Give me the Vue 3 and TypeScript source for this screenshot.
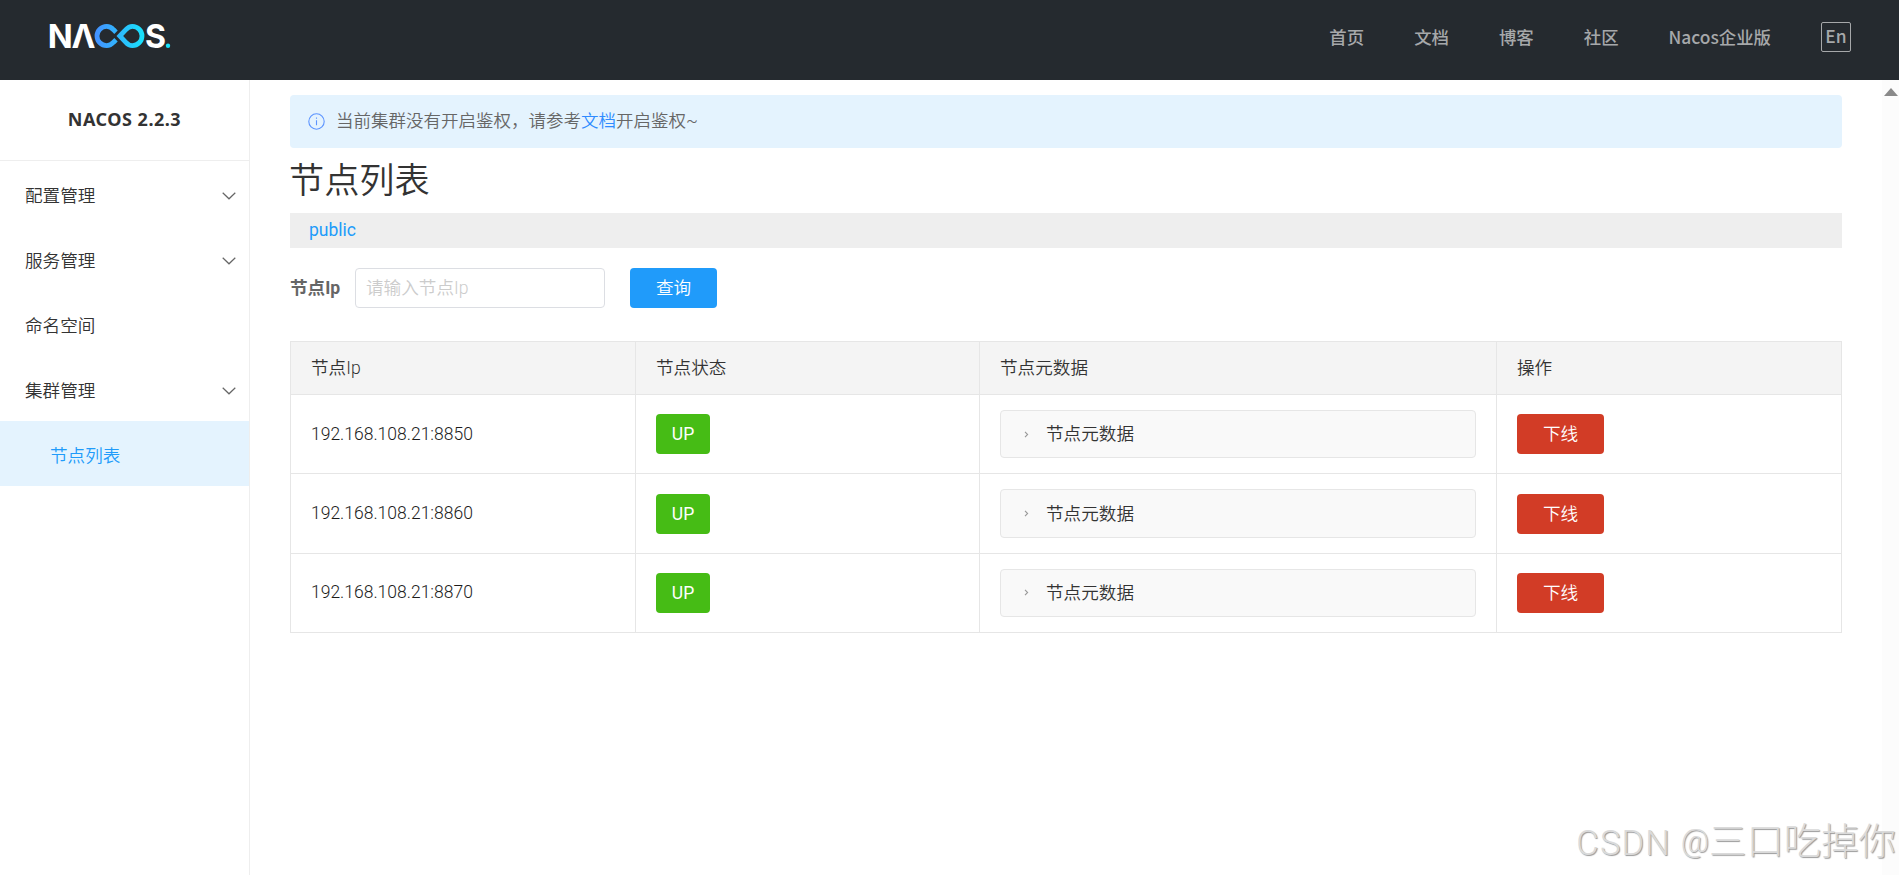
<script setup lang="ts">
interface MenuItem {
  label: string
  expandable: boolean
}

interface ClusterNode {
  ip: string
  state: string
}

const navLinks: string[] = ['首页', '文档', '博客', '社区', 'Nacos企业版']

const menu: MenuItem[] = [
  { label: '配置管理', expandable: true },
  { label: '服务管理', expandable: true },
  { label: '命名空间', expandable: false },
  { label: '集群管理', expandable: true },
]

const columns: string[] = ['节点Ip', '节点状态', '节点元数据', '操作']

const nodes: ClusterNode[] = [
  { ip: '192.168.108.21:8850', state: 'UP' },
  { ip: '192.168.108.21:8860', state: 'UP' },
  { ip: '192.168.108.21:8870', state: 'UP' },
]
</script>

<template>
  <div class="page">
    <header class="topbar">
      <svg class="logo" width="122" height="26" viewBox="0 0 122 26">
        <defs>
          <linearGradient id="loop" gradientUnits="userSpaceOnUse" x1="45" y1="0" x2="95" y2="0">
            <stop offset="0" stop-color="#4590ff" />
            <stop offset="1" stop-color="#16e3fb" />
          </linearGradient>
        </defs>
        <text class="logo-text" x="-2.3" y="25" textLength="25" lengthAdjust="spacingAndGlyphs">N</text>
        <text class="logo-text" x="21.5" y="25" textLength="24" lengthAdjust="spacingAndGlyphs">Λ</text>
        <g fill="none" stroke="url(#loop)" stroke-width="4.8">
          <path d="M66 9.2 L63.6 6.8 C61.6 4.6 59.2 3.4 56.6 3.4 A9.6 9.6 0 0 0 56.6 22.6 C59.2 22.6 61.6 21.4 63.6 19.2 L66 16.8" />
          <path d="M69.8 13 L75.6 6.9 C77.6 4.7 79.8 3.4 82.4 3.4 A9.6 9.6 0 0 1 82.4 22.6 C79.8 22.6 77.6 21.3 75.6 19.1 Z" />
        </g>
        <text class="logo-text" x="95" y="25" textLength="21" lengthAdjust="spacingAndGlyphs">S</text>
        <circle cx="118" cy="22.8" r="2.2" fill="#16e3fb" />
      </svg>
      <nav class="nav">
        <a v-for="link in navLinks" :key="link" class="nav-link">{{ link }}</a>
        <span class="lang">En</span>
      </nav>
    </header>

    <div class="body">
      <aside class="sidebar">
        <h1 class="version">NACOS 2.2.3</h1>
        <ul class="menu">
          <li v-for="item in menu" :key="item.label" class="menu-item">
            <span>{{ item.label }}</span>
            <svg v-if="item.expandable" class="chevron" width="14" height="8" viewBox="0 0 14 8">
              <path d="M0.7 0.7 L7 6.8 L13.3 0.7" fill="none" stroke="#666" stroke-width="1.2" />
            </svg>
          </li>
          <li class="menu-item active">节点列表</li>
        </ul>
      </aside>

      <main class="content">
        <div class="notice">
          <svg class="info" width="17" height="17" viewBox="0 0 17 17">
            <circle cx="8.5" cy="8.5" r="7.7" fill="none" stroke="#5c94ff" stroke-width="1.1" />
            <path d="M8.5 7.2 V12.2 M8.5 4.6 V5.8" stroke="#5c94ff" stroke-width="1.1" />
          </svg>
          <span>当前集群没有开启鉴权，请参考<a class="doc-link">文档</a>开启鉴权~</span>
        </div>
        <h2 class="title">节点列表</h2>
        <div class="namespace">public</div>

        <form class="search">
          <label class="search-label" for="ip">节点Ip</label>
          <input id="ip" class="search-input" type="text" placeholder="请输入节点Ip" />
          <button class="btn primary" type="button">查询</button>
        </form>

        <div class="table">
          <div class="row head">
            <div v-for="column in columns" :key="column" class="cell">{{ column }}</div>
          </div>
          <div v-for="node in nodes" :key="node.ip" class="row">
            <div class="cell ip">{{ node.ip }}</div>
            <div class="cell"><span class="tag">{{ node.state }}</span></div>
            <div class="cell">
              <div class="collapse">
                <svg class="caret" width="5" height="7" viewBox="0 0 5 7">
                  <path d="M1 0.8 L3.6 3.5 L1 6.2" fill="none" stroke="#999" stroke-width="1.1" />
                </svg>
                <span class="collapse-title">节点元数据</span>
              </div>
            </div>
            <div class="cell"><button class="btn danger" type="button">下线</button></div>
          </div>
        </div>
      </main>

      <div class="scrollbar">
        <svg width="14" height="8" viewBox="0 0 14 8"><path d="M0 8 L7 0 L14 8 Z" fill="#8a8a8a" /></svg>
      </div>
    </div>

    <div class="watermark">
      <span class="mark-latin">CSDN&nbsp;<span class="mark-at">@</span></span>
      <span class="mark-name">三口吃掉你</span>
    </div>
  </div>
</template>

<style>
html,
body {
  margin: 0;
  overflow: hidden;
}
</style>

<style scoped>
.page {
  display: flex;
  flex-direction: column;
  height: 875px;
  overflow: hidden;
  position: relative;
  background: #fff;
  color: #333;
  font-family: Roboto, 'Noto Sans CJK SC', sans-serif;
  font-size: 17.6px;
  font-weight: 350;
}

.page * {
  box-sizing: border-box;
}

.topbar {
  display: flex;
  align-items: flex-start;
  justify-content: space-between;
  flex: none;
  height: 80px;
  padding: 22px 48px 0 50px;
  background: #252a2f;
}

.logo {
  margin-top: 1px;
  overflow: visible;
}

.logo-text {
  fill: #fff;
  font-family: Inter, sans-serif;
  font-size: 33px;
  font-weight: 650;
}

.nav {
  display: flex;
  gap: 50px;
  color: #a6a8aa;
  font-family: 'Noto Sans CJK SC', sans-serif;
  font-size: 17.4px;
  font-weight: 500;
  line-height: 30px;
}

.lang {
  width: 30px;
  height: 30px;
  border: 1px solid #a6a8aa;
  border-radius: 2px;
  line-height: 26px;
  text-align: center;
}

.body {
  display: flex;
  flex: 1;
  min-height: 0;
}

.sidebar {
  width: 250px;
  flex: none;
  border-right: 1px solid #eee;
}

.version {
  height: 81px;
  margin: 0;
  border-bottom: 1px solid #eee;
  font-family: 'Noto Sans', sans-serif;
  font-size: 18px;
  font-weight: 700;
  letter-spacing: 0.5px;
  line-height: 79px;
  text-align: center;
}

.menu {
  margin: 0;
  padding: 0;
  list-style: none;
}

.menu-item {
  display: flex;
  align-items: center;
  justify-content: space-between;
  height: 65px;
  padding: 2px 13px 0 25px;
}

.menu-item.active {
  padding-left: 50px;
  background: #e4f3fe;
  color: #209bfa;
}

.chevron {
  margin-top: 2px;
}

.content {
  flex: 1;
  min-width: 0;
  padding: 15px 40px 0;
}

.notice {
  display: flex;
  align-items: center;
  gap: 11px;
  height: 53px;
  padding: 0 18px 4px;
  border-radius: 4px;
  background: #e4f3fe;
  color: #666;
  font-size: 17.5px;
}

.info {
  margin-top: 4px;
}

.doc-link {
  color: #2f8bff;
}

.title {
  height: 65px;
  margin: 0 0 0 -1px;
  font-size: 35.2px;
  font-weight: 350;
  line-height: 67px;
}

.namespace {
  height: 35px;
  padding-left: 19px;
  background: #eee;
  color: #209bfa;
  font-size: 17.5px;
  font-weight: 400;
  line-height: 34px;
}

.search {
  display: flex;
  align-items: center;
  height: 40px;
  margin: 20px 0 33px;
}

.search-label {
  width: 65px;
  padding-bottom: 3px;
  color: #666;
  font-weight: 700;
}

.search-input {
  width: 250px;
  height: 40px;
  margin-right: 25px;
  padding: 0 10px;
  border: 1px solid #dcdee3;
  border-radius: 4px;
  font: inherit;
}

.search-input::placeholder {
  color: #ccc;
}

.btn {
  width: 87px;
  height: 40px;
  padding: 0 0 3px;
  border: 0;
  border-radius: 4px;
  color: #fff;
  font: inherit;
}

.primary {
  padding-bottom: 4px;
  background: #209bfa;
}

.danger {
  background: #d23c26;
}

.table {
  border: 1px solid #e6e6e6;
  border-bottom: 0;
}

.row {
  display: grid;
  grid-template-columns: 345px 344px 517px 1fr;
  height: 79.4px;
  border-bottom: 1px solid #e6e6e6;
}

.row.head {
  height: 53px;
  background: #f4f4f4;
}

.cell {
  display: flex;
  align-items: center;
  padding: 0 20px;
  border-right: 1px solid #e6e6e6;
}

.row.head .cell {
  padding-bottom: 3px;
}

.cell:last-child {
  border-right: 0;
}

.ip {
  padding-bottom: 1px;
  color: #1c1c1c;
  font-size: 17.5px;
}

.tag {
  width: 54px;
  height: 40px;
  border-radius: 4px;
  background: #46bc15;
  color: #fff;
  font-size: 17.5px;
  font-weight: 400;
  line-height: 40px;
  text-align: center;
}

.collapse {
  display: flex;
  align-items: center;
  gap: 17px;
  width: 100%;
  height: 48.4px;
  padding-left: 23px;
  border: 1px solid #e6e6e6;
  border-radius: 4px;
  background: #f9f9f9;
}

.collapse-title {
  padding-bottom: 3px;
}

.scrollbar {
  display: flex;
  justify-content: center;
  width: 17px;
  flex: none;
  padding-top: 8px;
  background: #fcfcfc;
}

.watermark {
  display: flex;
  align-items: baseline;
  position: absolute;
  right: 3px;
  bottom: 5px;
  color: #dadada;
  font-weight: 300;
  line-height: 54px;
  text-shadow: 1px 1px 1px #999;
  white-space: nowrap;
}

.mark-latin {
  font-size: 34.5px;
  letter-spacing: 1.2px;
}

.mark-at {
  font-size: 31px;
  letter-spacing: 0;
  vertical-align: 3px;
}

.mark-name {
  font-size: 37.4px;
}
</style>
